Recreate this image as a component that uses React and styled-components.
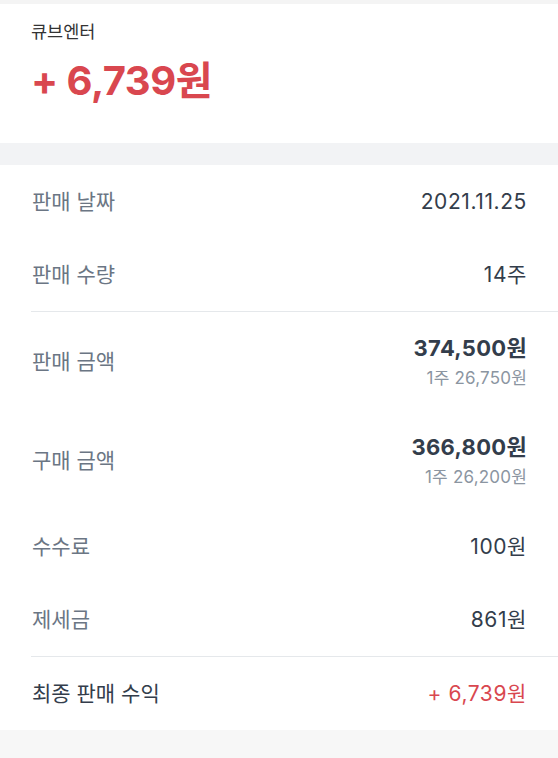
import React from "react";
import styled, { createGlobalStyle } from "styled-components";

const GlobalStyle = createGlobalStyle`
  html, body {
    margin: 0;
    padding: 0;
    background: #f7f7f7;
  }
  body {
    font-family: Inter, "Noto Sans CJK KR", sans-serif;
    -webkit-font-smoothing: antialiased;
  }
  * { box-sizing: border-box; }
`;

const Page = styled.div`
  display: flex;
  flex-direction: column;
  width: 100%;
`;

const TopStrip = styled.div`
  height: 4px;
  background: #f4f4f4;
`;

const Header = styled.section`
  background: #ffffff;
  padding: 16px 31px 38px;
  display: flex;
  flex-direction: column;
  gap: 13px;
`;

const Title = styled.div`
  font-size: 17.5px;
  line-height: 24px;
  color: #333333;
`;

const Profit = styled.div`
  font-size: 40px;
  line-height: 48px;
  font-weight: 700;
  color: #d9474f;
  letter-spacing: -0.5px;
`;

const Band = styled.div`
  height: 22px;
  background: #f2f3f5;
`;

const Details = styled.section`
  background: #ffffff;
  display: flex;
  flex-direction: column;
`;

const Row = styled.div`
  display: flex;
  align-items: center;
  justify-content: space-between;
  padding: 0 31px 0 32px;
  height: ${(p) => (p.$tall ? 99 : 73)}px;
`;

const Label = styled.span`
  font-size: 21px;
  line-height: 28px;
  color: ${(p) => (p.$strong ? "#333d4b" : "#6b7684")};
`;

const Value = styled.span`
  font-size: 21px;
  line-height: 28px;
  color: ${(p) => (p.$red ? "#d9474f" : "#333d4b")};
  letter-spacing: 0.6px;
`;

const ValueStack = styled.div`
  display: flex;
  flex-direction: column;
  align-items: flex-end;
`;

const BigValue = styled.span`
  font-size: 22px;
  line-height: 28px;
  font-weight: 700;
  color: #333d4b;
  letter-spacing: 0.3px;
`;

const SubValue = styled.span`
  margin-top: 4px;
  font-size: 17px;
  line-height: 24px;
  color: #8b95a1;
  letter-spacing: 0.2px;
`;

const Divider = styled.hr`
  margin: 0 0 0 31px;
  border: none;
  height: 1px;
  background: #e5e8eb;
`;

function SimpleRow({ label, value, strong, red }) {
  return (
    <Row>
      <Label $strong={strong}>{label}</Label>
      <Value $red={red}>{value}</Value>
    </Row>
  );
}

function AmountRow({ label, value, sub }) {
  return (
    <Row $tall>
      <Label>{label}</Label>
      <ValueStack>
        <BigValue>{value}</BigValue>
        <SubValue>{sub}</SubValue>
      </ValueStack>
    </Row>
  );
}

export default function App() {
  return (
    <>
      <GlobalStyle />
      <Page>
        <TopStrip />
        <Header>
          <Title>큐브엔터</Title>
          <Profit>+ 6,739원</Profit>
        </Header>
        <Band />
        <Details>
          <SimpleRow label="판매 날짜" value="2021.11.25" />
          <SimpleRow label="판매 수량" value="14주" />
          <Divider />
          <AmountRow label="판매 금액" value="374,500원" sub="1주 26,750원" />
          <AmountRow label="구매 금액" value="366,800원" sub="1주 26,200원" />
          <SimpleRow label="수수료" value="100원" />
          <SimpleRow label="제세금" value="861원" />
          <Divider />
          <SimpleRow label="최종 판매 수익" value="+ 6,739원" strong red />
        </Details>
      </Page>
    </>
  );
}
